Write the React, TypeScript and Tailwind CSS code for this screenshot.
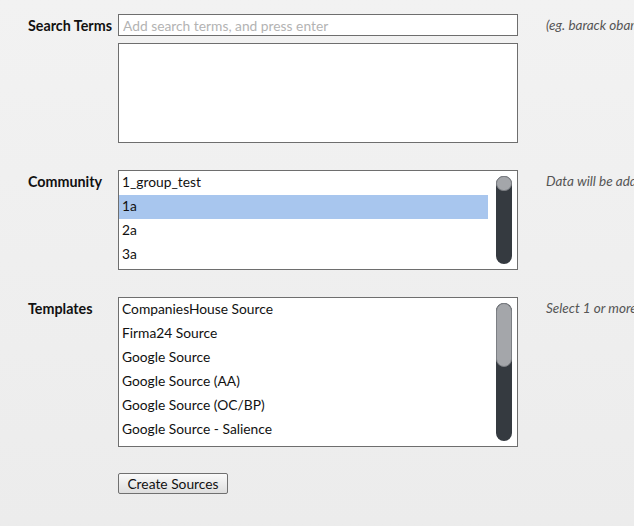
import React from 'react';

const communities = ['1_group_test', '1a', '2a', '3a'];
const templates = [
  'CompaniesHouse Source',
  'Firma24 Source',
  'Google Source',
  'Google Source (AA)',
  'Google Source (OC/BP)',
  'Google Source - Salience',
];

function ScrollBar({ thumb }: { thumb: string }) {
  return (
    <div className="absolute right-[5px] top-[5px] bottom-[5px] w-[16px] rounded-full bg-[#353a40]">
      <div className={`w-full rounded-full bg-[#a4a6aa] border border-[#7c7f84] ${thumb}`} />
    </div>
  );
}

function ListBox({
  items,
  selected,
  height,
  thumb,
}: {
  items: string[];
  selected?: number;
  height: string;
  thumb: string;
}) {
  return (
    <div className={`relative w-[400px] ${height} border border-[#6e6e6e] bg-white overflow-hidden`}>
      <div className="pr-[29px]">
        {items.map((it, i) => (
          <div
            key={it}
            className={`h-[24px] leading-[22px] pl-[3px] text-[13.8px] text-[#111] ${i === selected ? 'bg-[#a8c6ee]' : ''}`}
          >
            {it}
          </div>
        ))}
      </div>
      <ScrollBar thumb={thumb} />
    </div>
  );
}

function Row({ label, hint, children, className = '' }: { label: string; hint?: string; children: React.ReactNode; className?: string }) {
  return (
    <div className={`flex ${className}`}>
      <div className="w-[90px] shrink-0 font-bold text-[14.3px] text-[#111] leading-[23px]">{label}</div>
      <div className="shrink-0">{children}</div>
      {hint && <div className="ml-[28px] shrink-0 italic text-[13.5px] text-[#555] leading-[23px] whitespace-nowrap">{hint}</div>}
    </div>
  );
}

export default function App() {
  return (
    <div
      className="w-[634px] h-[526px] overflow-hidden bg-gradient-to-b from-[#f2f2f2] to-[#ececec] pl-[28px] pt-[14px]"
      style={{ fontFamily: 'Lato, "Open Sans", sans-serif' }}
    >
      <Row label="Search Terms" hint="(eg. barack obama)">
        <input
          className="block w-[400px] h-[22px] border border-[#6e6e6e] bg-white px-[4px] text-[13.8px] outline-none placeholder:text-[#b3b3b3]"
          placeholder="Add search terms, and press enter"
        />
        <div className="mt-[7px] w-[400px] h-[100px] border border-[#6e6e6e] bg-white" />
      </Row>

      <Row label="Community" hint="Data will be added to" className="mt-[27px]">
        <ListBox items={communities} selected={1} height="h-[100px]" thumb="h-[15px]" />
      </Row>

      <Row label="Templates" hint="Select 1 or more templates" className="mt-[27px]">
        <ListBox items={templates} height="h-[150px]" thumb="h-[64px]" />
      </Row>

      <div className="pl-[90px] mt-[26px]">
        <button className="block h-[21px] w-[110px] border border-[#707070] rounded-[2px] bg-gradient-to-b from-[#fafafa] to-[#dedede] text-[13.8px] text-[#111] leading-[19px]">
          Create Sources
        </button>
      </div>
    </div>
  );
}
